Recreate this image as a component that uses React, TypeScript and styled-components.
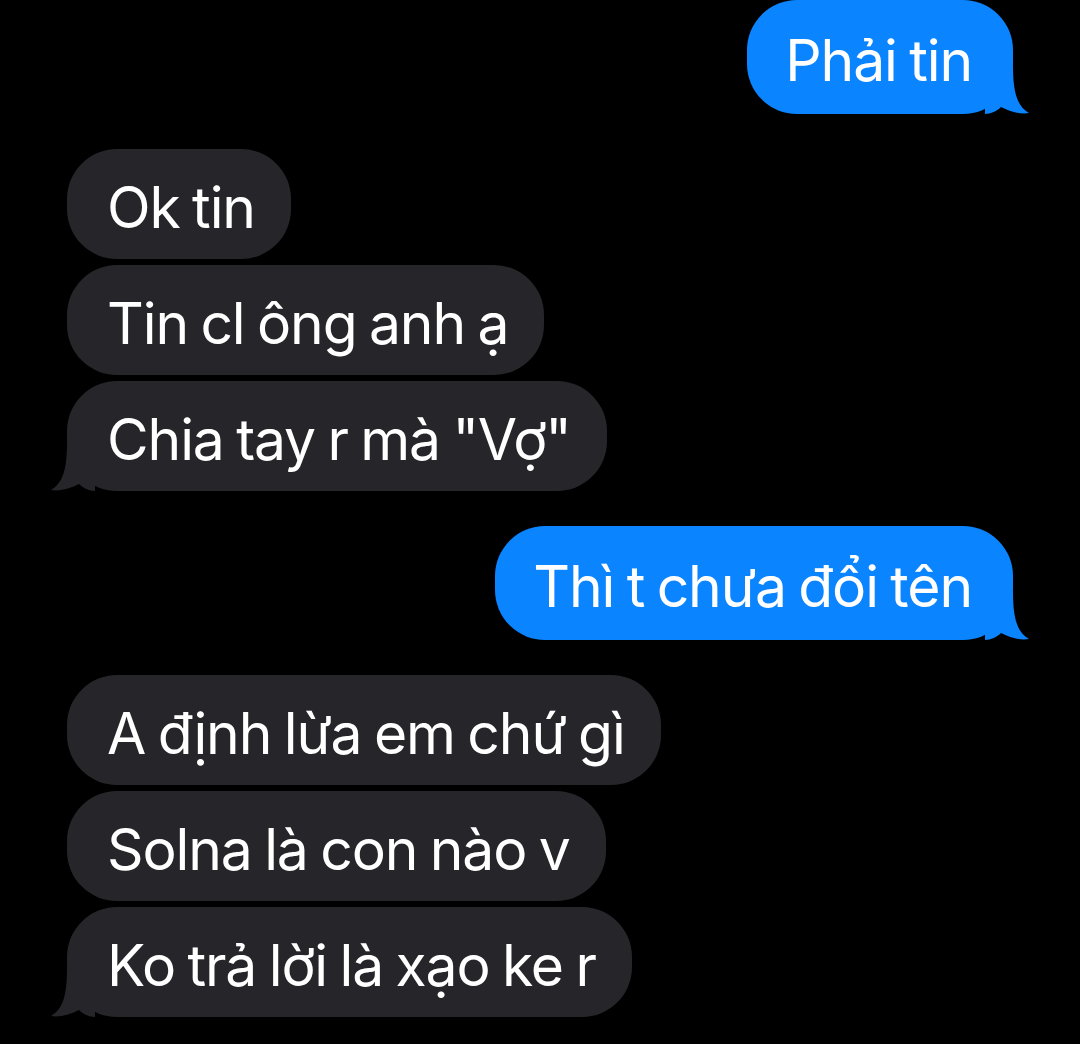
import styled, { createGlobalStyle } from "styled-components";

const GlobalStyle = createGlobalStyle`
  html, body {
    margin: 0;
    padding: 0;
    background: #000;
  }
  body {
    font-family: Inter, "Noto Sans", sans-serif;
    -webkit-font-smoothing: antialiased;
  }
`;

const Thread = styled.div`
  width: 1080px;
  height: 1044px;
  box-sizing: border-box;
  padding: 0 67px;
  display: flex;
  flex-direction: column;
  overflow: hidden;
  background: #000;
`;

const Group = styled.div<{ $mine?: boolean }>`
  display: flex;
  flex-direction: column;
  align-items: ${(p) => (p.$mine ? "flex-end" : "flex-start")};
  gap: 6px;
  margin-top: 35px;
  &:first-child {
    margin-top: 0;
  }
`;

const Bubble = styled.div<{ $mine?: boolean }>`
  position: relative;
  box-sizing: border-box;
  height: ${(p) => (p.$mine ? 114 : 110)}px;
  display: flex;
  align-items: center;
  padding: ${(p) => (p.$mine ? "6px 41px 0 38px" : "6px 36px 0 40px")};
  border-radius: 50px;
  background: ${(p) => (p.$mine ? "#0a84ff" : "#262529")};
  color: #fff;
  font-size: 57px;
  letter-spacing: -1.1px;
  word-spacing: -2.5px;
  white-space: nowrap;
`;

const Label = styled.span`
  position: relative;
`;

const Tail = styled.svg<{ $mine?: boolean }>`
  position: absolute;
  bottom: 0;
  width: 44px;
  height: 48px;
  ${(p) => (p.$mine ? "right: -16px;" : "left: -16px; transform: scaleX(-1);")}
  fill: ${(p) => (p.$mine ? "#0a84ff" : "#262529")};
`;

const BubbleTail = ({ mine }: { mine?: boolean }) => (
  <Tail $mine={mine} viewBox="0 0 44 48">
    <path d="M0 0 H28 C28 26 32 40 44 47 C36 48.5 26 46 16 41 C12 45 6 48 0 48 Z" />
  </Tail>
);

type Msg = { text: string };
type Block = { mine?: boolean; msgs: Msg[] };

const thread: Block[] = [
  { mine: true, msgs: [{ text: "Phải tin" }] },
  {
    msgs: [
      { text: "Ok tin" },
      { text: "Tin cl ông anh ạ" },
      { text: 'Chia tay r mà "Vợ"' },
    ],
  },
  { mine: true, msgs: [{ text: "Thì t chưa đổi tên" }] },
  {
    msgs: [
      { text: "A định lừa em chứ gì" },
      { text: "Solna là con nào v" },
      { text: "Ko trả lời là xạo ke r" },
    ],
  },
];

const App = () => {
  return (
    <>
      <GlobalStyle />
      <Thread>
        {thread.map((block, i) => (
          <Group key={i} $mine={block.mine}>
            {block.msgs.map((m, j) => (
              <Bubble key={j} $mine={block.mine}>
                {j === block.msgs.length - 1 && <BubbleTail mine={block.mine} />}
                <Label>{m.text}</Label>
              </Bubble>
            ))}
          </Group>
        ))}
      </Thread>
    </>
  );
};

export default App;
